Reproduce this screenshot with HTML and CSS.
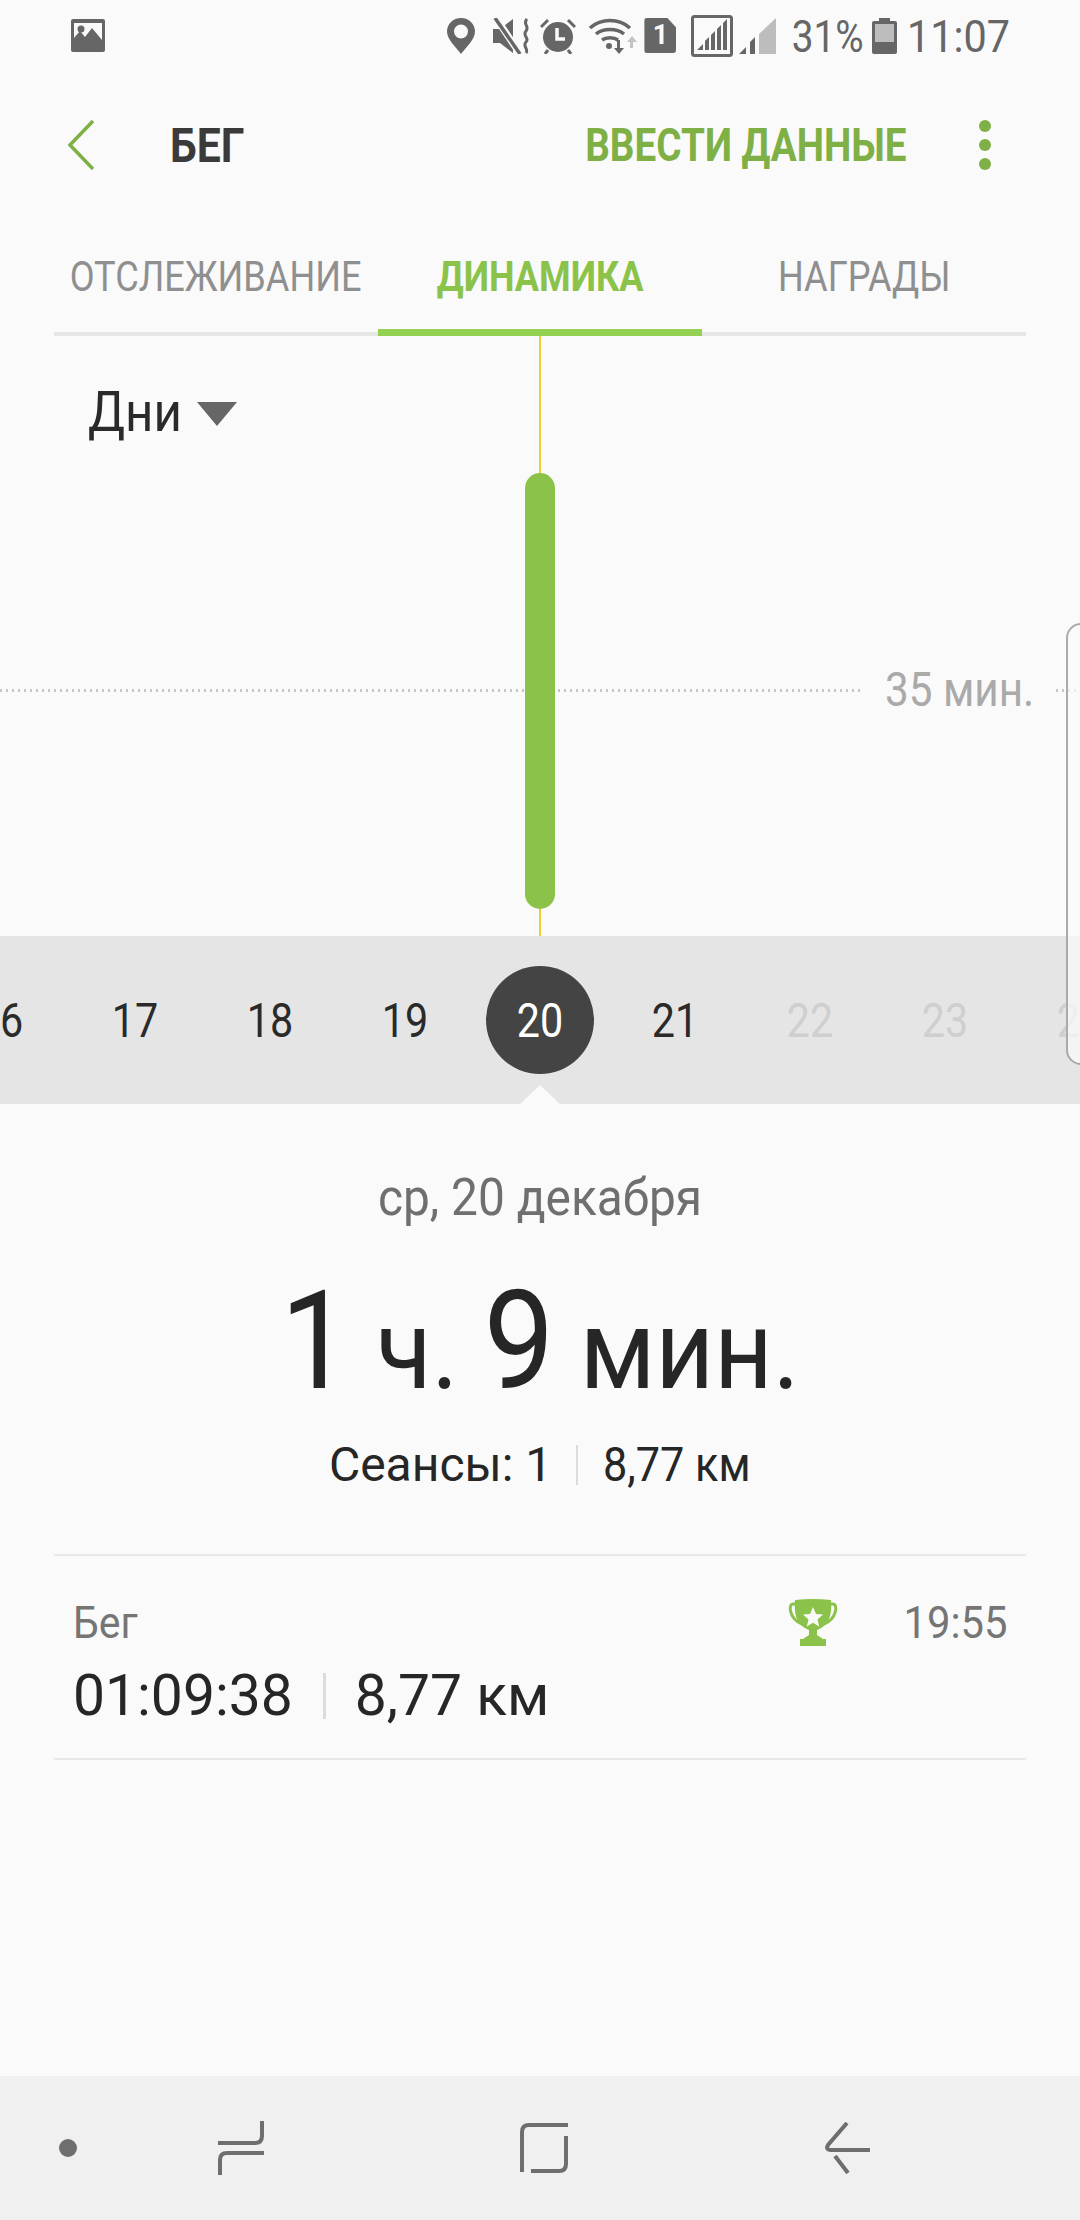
FILE: index.html
```html
<!DOCTYPE html>
<html lang="ru">
<head>
<meta charset="utf-8">
<title>Бег</title>
<link rel="stylesheet" href="styles.css">
</head>
<body>
<div class="screen">
  <div class="status">
    <svg class="ic-picture" width="34" height="33" viewBox="0 0 34 33"><path fill="#666" fill-rule="evenodd" d="M2 0h30a2 2 0 0 1 2 2v29a2 2 0 0 1-2 2H2a2 2 0 0 1-2-2V2a2 2 0 0 1 2-2zm1 4v15l6-7 5 6 7-9 10 12V4z"/><circle cx="10" cy="10" r="3.500" fill="#666"/></svg>
    <div class="status-right">
      <svg class="gap-a" width="28" height="36" viewBox="0 0 28 36"><path fill="#666" fill-rule="evenodd" d="M14 0c8 0 14 6 14 13.500C28 22 18 30 14 36 10 30 0 22 0 13.500 0 6 6 0 14 0zm0 6.500a7 7 0 1 0 0 14 7 7 0 0 0 0-14z"/></svg>
      <svg class="gap-b" width="38" height="36" viewBox="0 0 38 36"><path fill="#666" d="M0 11h7L20 1v34L7 25H0z"/><path stroke="#fafafa" stroke-width="7" d="M3 0l24 36"/><path stroke="#666" stroke-width="3.500" fill="none" d="M2 0l25 36"/><path stroke="#666" stroke-width="3" fill="none" d="M34 1c-5 5 3 7-1 12s4 7 0 11 3 7 0 11"/></svg>
      <svg class="gap-c" width="36" height="36" viewBox="0 0 36 36"><circle cx="18" cy="19" r="15" fill="#666"/><path fill="none" stroke="#666" stroke-width="3" d="M1 9l7-7M35 9l-7-7M8 32l-3 4M28 32l3 4"/><path fill="none" stroke="#fafafa" stroke-width="3.500" d="M17 10v11h8"/></svg>
      <svg class="gap-d" width="50" height="36" viewBox="0 0 50 36"><path fill="none" stroke="#666" stroke-width="3.500" d="M1 10c11-10 29-10 40 0M7 16c7-6 21-6 28 0M13 22c4-3 12-3 16 0"/><circle cx="20" cy="28" r="3" fill="#666"/><path fill="#666" d="M28 22h3v8h4l-5 6-5-6h3z"/><path fill="#c4c4c4" d="M41 30h3v-6h4l-5-6-5 6h3z"/></svg>
      <div class="sim">1</div>
      <svg class="gap-e" width="42" height="42" viewBox="0 0 42 42"><rect x="1.500" y="1.500" width="39" height="39" rx="2" fill="none" stroke="#666" stroke-width="3"/><path fill="#666" d="M6 35l6-6v6zM14 35v-9l4-4v13zM20 35V20l4-4v19zM26 35V14l4-4v25zM32 35V8l4-4v31z"/></svg>
      <svg class="gap-f" width="37" height="36" viewBox="0 0 37 36"><path fill="#666" d="M0 36l7-7v7zM11 36V24l5-5v17z"/><path fill="#bdbdbd" d="M20 36V16L37 0v36z"/></svg>
      <span class="st-text pct">31%</span>
      <svg class="gap-g" width="25" height="36" viewBox="0 0 25 36"><path fill="#666" d="M7 0h11v3h5a2 2 0 0 1 2 2v29a2 2 0 0 1-2 2H2a2 2 0 0 1-2-2V5a2 2 0 0 1 2-2h5z"/><rect x="3" y="6" width="19" height="18" fill="#bdbdbd"/></svg>
      <span class="st-text time">11:07</span>
    </div>
  </div>

  <div class="header">
    <svg class="back" width="26" height="50" viewBox="0 0 26 50"><path fill="none" stroke="#7fb045" stroke-width="3.500" d="M25 1L2 25l23 24"/></svg>
    <div class="title">БЕГ</div>
    <div class="action">ВВЕСТИ ДАННЫЕ</div>
    <div class="more"><i></i><i></i><i></i></div>
  </div>

  <div class="tabs">
    <div class="tab"><span>ОТСЛЕЖИВАНИЕ</span></div>
    <div class="tab active"><span>ДИНАМИКА</span></div>
    <div class="tab"><span>НАГРАДЫ</span></div>
  </div>

  <div class="chart">
    <div class="cursor"></div>
    <div class="dots"></div>
    <div class="bar"></div>
    <div class="goal"><span>35 мин.</span></div>
    <div class="period"><span>Дни</span><i class="caret"></i></div>
  </div>

  <div class="strip">
    <div class="day"><span>16</span></div>
    <div class="day"><span>17</span></div>
    <div class="day"><span>18</span></div>
    <div class="day"><span>19</span></div>
    <div class="day now"><span>20</span></div>
    <div class="day"><span>21</span></div>
    <div class="day off"><span>22</span></div>
    <div class="day off"><span>23</span></div>
    <div class="day off"><span>24</span></div>
    <i class="pointer"></i>
  </div>
  <div class="handle"></div>

  <div class="summary">
    <div class="date">ср, 20 декабря</div>
    <div class="total"><span class="big">1</span> ч. <span class="big">9</span> мин.</div>
    <div class="sub"><span class="sessions">Сеансы: 1</span><i class="sep"></i><span class="dist">8,77 км</span></div>
  </div>

  <div class="row">
    <div class="row-top">
      <span class="row-name">Бег</span>
      <svg class="trophy" width="50" height="48" viewBox="0 0 50 48"><path fill="none" stroke="#8bc34a" stroke-width="3" d="M9 5H5C0 5 1 20 14 25M41 5h4c5 0 4 15-9 20"/><path fill="#8bc34a" d="M7 1q18-2 36 0c1 14-1 25-14 30v5l6 4h3v7H12v-7h3l6-4v-5C8 26 6 15 7 1z"/><path fill="#fafafa" d="M25 8l3 7 7 .6-5.500 4.800 1.700 7.100L25 23.700l-6.200 3.800 1.700-7.100L15 15.600l7-.6z"/></svg>
      <span class="row-time">19:55</span>
    </div>
    <div class="row-main"><span>01:09:38</span><i class="sep tall"></i><span>8,77 км</span></div>
  </div>

  <div class="fill"></div>

  <div class="nav">
    <i class="nav-dot"></i>
    <svg class="nav-recent" width="46" height="54" viewBox="0 0 46 54"><path fill="none" stroke="#6e6e6e" stroke-width="4" d="M44 0v15q0 7-7 7H0M46 32H9q-7 0-7 7v15"/></svg>
    <svg class="nav-home" width="48" height="50" viewBox="0 0 48 50"><path fill="none" stroke="#6e6e6e" stroke-width="4" d="M2 49V9q0-7 7-7h39M46 13v28q0 7-7 7H11"/></svg>
    <svg class="nav-back" width="46" height="52" viewBox="0 0 46 52"><path fill="none" stroke="#6e6e6e" stroke-width="4" d="M23 1L4 23q-3 5 4 5h38M11 34l13 17"/></svg>
  </div>
</div>
</body>
</html>
```

FILE: styles.css
```css
* { box-sizing: border-box; }
html, body { margin: 0; padding: 0; }
body { font-family: Roboto, "Noto Sans", sans-serif; background: #fafafa; }
i { display: block; }
.screen { width: 1080px; height: 2220px; display: flex; flex-direction: column; background: #fafafa; overflow: hidden; position: relative; }

.status { height: 72px; flex: none; padding: 18px 70px 0 71px; display: flex; justify-content: space-between; align-items: flex-start; }
.ic-picture { margin-top: 1px; }
.status-right { display: flex; align-items: flex-start; }
.status-right svg { flex: none; }
.gap-a { margin-right: 18px; }
.gap-b { margin-right: 9px; }
.gap-c { margin-right: 13px; }
.gap-d { margin-right: 5px; }
.gap-e { margin: -3px 6px 0 15px; }
.gap-f { margin-right: 4px; }
.gap-g { margin: 0 1px 0 8px; }
.sim { width: 32px; height: 35px; background: #666; color: #fafafa; border-radius: 3px; clip-path: polygon(0 0, 72% 0, 100% 28%, 100% 100%, 0 100%); font: 700 27px/35px Roboto, sans-serif; text-align: center; }
.st-text { font-size: 45px; line-height: 38px; color: #666; white-space: nowrap; transform-origin: right center; }
.pct { transform: scaleX(0.86); }
.time { transform: scaleX(0.92); }

.header { height: 146px; flex: none; display: flex; align-items: center; padding: 0 89px 0 68px; }
.back { flex: none; }
.title { margin-left: 76px; font-size: 48px; font-weight: 700; color: #3a3a3a; transform: scaleX(0.89); transform-origin: left center; }
.action { margin-left: auto; margin-right: 72px; font-size: 46px; font-weight: 700; color: #7fb045; white-space: nowrap; transform: scaleX(0.84); transform-origin: right center; }
.more { display: flex; flex-direction: column; gap: 7px; }
.more i { width: 12px; height: 12px; border-radius: 50%; background: #7fb045; }

.tabs { margin: 0 54px; height: 118px; flex: none; display: flex; border-bottom: 4px solid #e6e6e6; }
.tab { width: 324px; height: 118px; padding-top: 4px; font-size: 42px; line-height: 110px; color: #8f8f8f; display: flex; justify-content: center; white-space: nowrap; }
.tab span { flex: none; transform: scaleX(0.86); }
.active { color: #8bc34a; font-weight: 700; border-bottom: 7px solid #94d152; }

.chart { height: 600px; flex: none; position: relative; }
.cursor { position: absolute; left: 539px; top: 0; bottom: 0; width: 2px; background: #f0cf30; }
.dots { position: absolute; left: 0; right: 0; top: 353px; height: 3px; background: repeating-linear-gradient(90deg, #c6c6c6 0 2px, transparent 2px 6px); }
.bar { position: absolute; left: 525px; top: 137px; width: 30px; height: 436px; border-radius: 15px; background: #8bc34a; }
.goal { position: absolute; left: 861px; width: 193px; top: 326px; padding-left: 24px; background: #fafafa; font-size: 48px; line-height: 56px; color: #aaa; white-space: nowrap; }
.goal span { display: inline-block; transform: scaleX(0.88); transform-origin: left center; }
.period { position: absolute; left: 88px; top: 44px; font-size: 56px; line-height: 64px; color: #2a2a2a; display: flex; align-items: center; }
.period span { transform: scaleX(0.88); transform-origin: left center; }
.caret { width: 0; height: 0; margin: 4px 0 0 2px; border-left: 20px solid transparent; border-right: 20px solid transparent; border-top: 24px solid #666; }

.strip { height: 168px; flex: none; background: #e5e5e5; position: relative; display: flex; justify-content: center; align-items: center; }
.day { flex: none; width: 135px; text-align: center; font-size: 48px; color: #2a2a2a; }
.day span { display: inline-block; transform: scaleX(0.86); }
.day.off { color: #cfcfcf; }
.now { position: relative; z-index: 0; color: #fff; }
.now::before { content: ""; position: absolute; z-index: -1; left: 13.500px; top: 50%; width: 108px; height: 108px; margin-top: -54px; border-radius: 50%; background: #444; }
.pointer { position: absolute; left: 520px; bottom: 0; width: 0; height: 0; border-left: 20px solid transparent; border-right: 20px solid transparent; border-bottom: 19px solid #fafafa; }
.handle { position: absolute; left: 1066px; top: 623px; width: 30px; height: 442px; border: 2px solid #aaa; border-radius: 22px; background: rgba(250, 250, 250, 0.72); }

.summary { text-align: center; flex: none; }
.date { margin-top: 64px; font-size: 52px; line-height: 60px; color: #6f6f6f; transform: scaleX(0.92); }
.total { margin-top: 38px; font-size: 112px; line-height: 150px; color: #262626; transform: scaleX(0.91); white-space: nowrap; }
.big { font-size: 138px; }
.sub { margin-top: 10px; display: flex; justify-content: center; align-items: center; font-size: 48px; line-height: 60px; color: #262626; }
.sep { width: 2px; height: 40px; margin: 0 25px 0 24px; background: #dcdcdc; }
.dist { margin-right: -16px; transform: scaleX(0.9); transform-origin: left center; }

.row { margin: 59px 54px 0; height: 206px; flex: none; border-top: 2px solid #e8e8e8; border-bottom: 2px solid #e8e8e8; padding: 21px 18px 0 19px; }
.row-top { display: flex; align-items: center; height: 92px; }
.row-name { font-size: 44px; color: #757575; margin-right: auto; transform: scaleX(0.93); transform-origin: left center; }
.trophy { margin-right: 60px; flex: none; }
.row-time { font-size: 44px; color: #757575; transform: scaleX(0.95); transform-origin: right center; }
.row-main { margin-top: 4px; display: flex; align-items: center; font-size: 57px; line-height: 46px; color: #262626; }
.sep.tall { width: 3px; height: 46px; margin: 0 29px 0 30px; }

.fill { flex: 1; }
.nav { height: 144px; flex: none; background: #f0f0f0; display: flex; align-items: center; padding-left: 59px; }
.nav-dot { width: 18px; height: 18px; border-radius: 50%; background: #6e6e6e; }
.nav-recent { margin-left: 141px; }
.nav-home { margin-left: 256px; }
.nav-back { margin-left: 256px; }
```
